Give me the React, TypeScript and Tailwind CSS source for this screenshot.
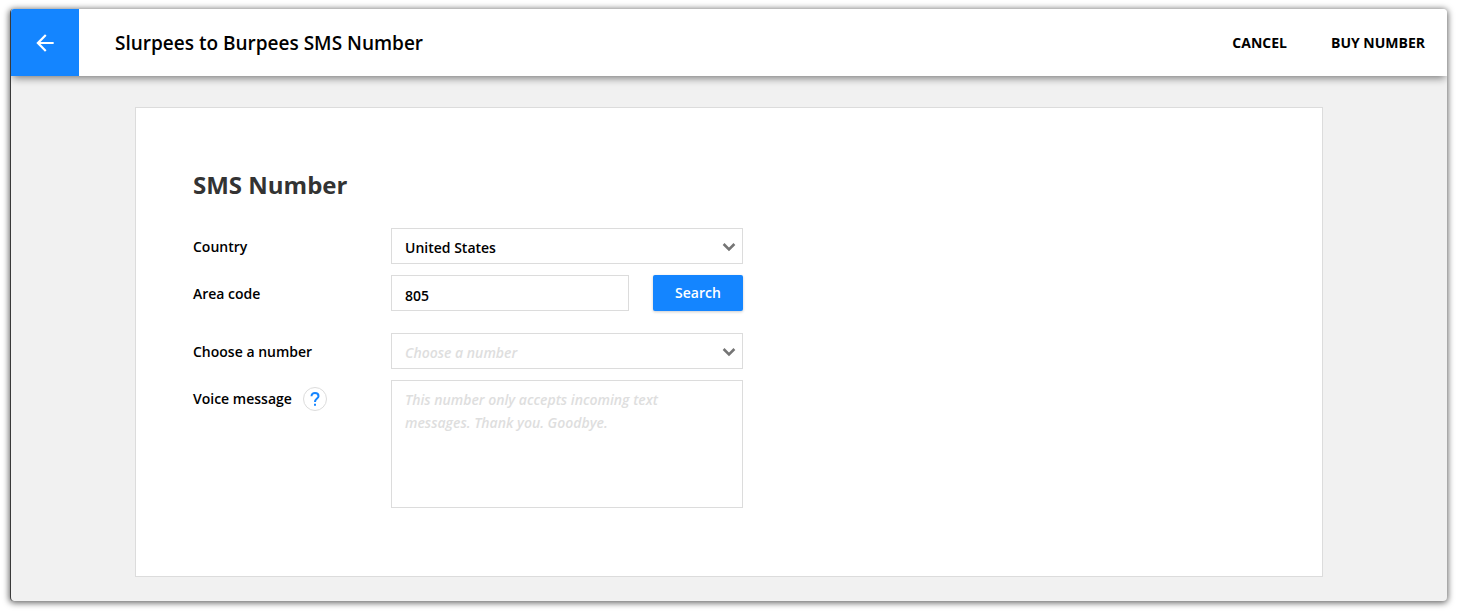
import { useState } from 'react'
import type { ReactNode } from 'react'
import { MdArrowBack } from 'react-icons/md'

const FIELD =
  'block w-full rounded-none border border-[#dcdcdc] bg-white px-[13px] text-sm font-semibold outline-none focus:border-[#1485ff]'

interface RowProps {
  id: string
  label: string
  extra?: ReactNode
  children: ReactNode
}

function Row({ id, label, extra, children }: RowProps) {
  return (
    <div className="flex items-start">
      <div className="flex h-[38px] w-[198px] shrink-0 items-center gap-[11px]">
        <label htmlFor={id}>{label}</label>
        {extra}
      </div>
      <div className="flex w-[352px] gap-6">{children}</div>
    </div>
  )
}

interface SelectProps {
  id: string
  value: string
  options: string[]
  placeholder?: string
  onChange: (value: string) => void
}

function Select({ id, value, options, placeholder, onChange }: SelectProps) {
  return (
    <div className="relative w-full">
      <select
        id={id}
        value={value}
        onChange={(e) => onChange(e.target.value)}
        className={`${FIELD} h-9 appearance-none pt-1 ${value ? 'text-black' : 'text-[#dedede] italic'}`}
      >
        {placeholder && <option value="">{placeholder}</option>}
        {options.map((o) => (
          <option key={o} value={o}>
            {o}
          </option>
        ))}
      </select>
      <svg
        viewBox="0 0 14 10"
        className="pointer-events-none absolute top-3.5 right-[7px] h-2.5 w-3.5 fill-none stroke-[#757575] stroke-[2.6]"
      >
        <path d="M1.6 2 7 7.400l5.400-5.400" />
      </svg>
    </div>
  )
}

export default function App() {
  const [country, setCountry] = useState('United States')
  const [areaCode, setAreaCode] = useState('805')
  const [number, setNumber] = useState('')
  const [message, setMessage] = useState('')

  return (
    <div className="min-h-screen bg-white px-2.5 pt-[9px] pb-[11px] font-['Open_Sans',sans-serif] text-sm font-semibold text-black">
      <div className="overflow-hidden rounded border-l border-[#3a3a3a] bg-[#f1f1f1] shadow-[0_1px_6px_1px_rgba(0,0,0,0.6)]">
        <header className="flex h-[67px] items-center bg-white shadow-[0_4px_8px_-2px_rgba(0,0,0,0.5)]">
          <button
            type="button"
            aria-label="Back"
            className="flex h-full w-[68px] items-center justify-center bg-[#1485ff] text-white"
          >
            <MdArrowBack size={26} />
          </button>
          <h1 className="ml-9 flex-1 text-[19px] leading-7">Slurpees to Burpees SMS Number</h1>
          <div className="mr-[22px] flex gap-11 font-bold">
            <button type="button">CANCEL</button>
            <button type="button">BUY NUMBER</button>
          </div>
        </header>

        <main className="mx-[124px] mt-[31px] mb-6 border border-[#dcdcdc] bg-white px-[57px] pt-[61px] pb-[68px]">
          <h2 className="mb-[27px] text-2xl font-bold text-[#333]">SMS Number</h2>
          <form className="flex flex-col gap-[9px]" onSubmit={(e) => e.preventDefault()}>
            <Row id="country" label="Country">
              <Select
                id="country"
                value={country}
                options={['United States', 'Canada']}
                onChange={setCountry}
              />
            </Row>
            <Row id="area-code" label="Area code">
              <input
                id="area-code"
                value={areaCode}
                onChange={(e) => setAreaCode(e.target.value)}
                className={`${FIELD} h-9 min-w-0 flex-1 pt-1 text-black`}
              />
              <button
                type="submit"
                className="h-9 w-[90px] shrink-0 rounded-xs bg-[#1485ff] text-white shadow-[0_1px_3px_rgba(0,0,0,0.2)]"
              >
                Search
              </button>
            </Row>
            <div className="mt-[11px]">
              <Row id="number" label="Choose a number">
                <Select
                  id="number"
                  value={number}
                  options={[]}
                  placeholder="Choose a number"
                  onChange={setNumber}
                />
              </Row>
            </div>
            <Row
              id="message"
              label="Voice message"
              extra={
                <button
                  type="button"
                  aria-label="Help"
                  className="flex size-6 items-center justify-center rounded-full border border-[#dcdcdc] text-[#1485ff]"
                >
                  <svg viewBox="0 0 10 14" className="h-3.5 w-2.5 fill-none stroke-current stroke-2">
                    <path d="M1.500 4.300C1.500 2.200 3 1 5 1s3.500 1.200 3.500 3.200C8.500 6.500 5 6.800 5 10" />
                    <path d="M5 11.800v2" />
                  </svg>
                </button>
              }
            >
              <textarea
                id="message"
                value={message}
                onChange={(e) => setMessage(e.target.value)}
                placeholder="This number only accepts incoming text messages. Thank you. Goodbye."
                className={`${FIELD} h-32 resize-none py-[7px] pr-10 leading-[23px] text-black placeholder:text-[#dedede] placeholder:italic`}
              />
            </Row>
          </form>
        </main>
      </div>
    </div>
  )
}
